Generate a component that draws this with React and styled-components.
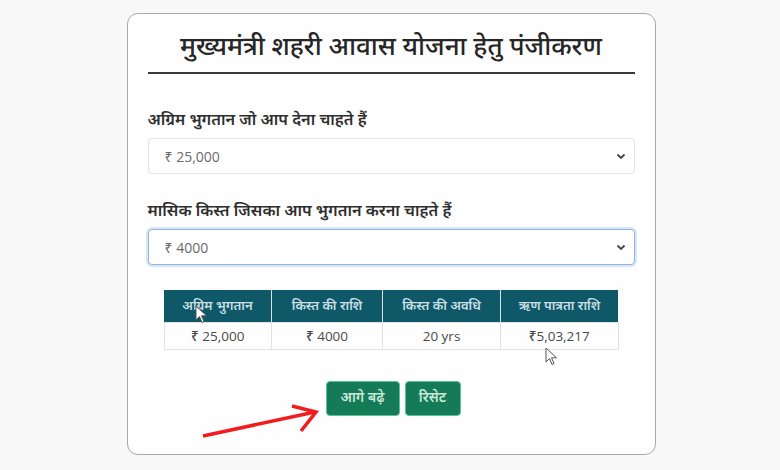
import React from "react";
import styled, { createGlobalStyle } from "styled-components";

const Global = createGlobalStyle`
  html, body { margin: 0; padding: 0; background: #f8f8f8; }
  body { font-family: "Noto Sans Devanagari", "Noto Sans", "Liberation Sans", sans-serif; }
`;

const Page = styled.div`
  position: relative;
  width: 780px;
  height: 470px;
  display: flex;
  justify-content: center;
  padding-top: 13px;
  box-sizing: border-box;
`;

const Card = styled.div`
  width: 529px;
  height: 442px;
  box-sizing: border-box;
  background: #fefefe;
  border: 1.5px solid #a9a9a9;
  border-radius: 11px;
  padding: 16px 20px 0 20px;
  display: flex;
  flex-direction: column;
  margin-left: 2px;
`;

const Title = styled.h2`
  margin: 0;
  text-align: center;
  font-size: 26px;
  font-weight: 500;
  color: #262626;
  line-height: 38px;
  padding-bottom: 4px;
  border-bottom: 2.5px solid #3a3a3a;
`;

const Field = styled.div`
  display: flex;
  flex-direction: column;
  margin-top: ${(p) => p.$top}px;
`;

const Label = styled.label`
  font-size: 16.2px;
  font-weight: 600;
  color: #2e2e2e;
  line-height: 22px;
  margin-bottom: 6px;
`;

const Select = styled.div`
  height: 36px;
  box-sizing: border-box;
  border: 1px solid ${(p) => (p.$focus ? "#8fb4e6" : "#e4e4e4")};
  box-shadow: ${(p) => (p.$focus ? "0 0 0 2px rgba(150,185,235,0.35)" : "none")};
  border-radius: 4px;
  background: #fff;
  display: flex;
  align-items: center;
  justify-content: space-between;
  padding: 0 8px 0 16px;
  font-family: "Open Sans", "Noto Sans", sans-serif;
  font-size: 14px;
  color: #6a6a6a;
`;

const Chevron = () => (
  <svg width="10" height="8" viewBox="0 0 10 8">
    <path d="M1.5 2.5 L5 6 L8.5 2.5" stroke="#444" strokeWidth="1.8" fill="none" />
  </svg>
);

const TableWrap = styled.div`
  margin: 25px 15px 0 15px;
  display: flex;
  justify-content: center;
`;

const Table = styled.table`
  width: 455px;
  border-collapse: collapse;
  table-layout: fixed;
`;

const Th = styled.th`
  background: #0f5868;
  color: #c9dde4;
  font-size: 13px;
  font-weight: 600;
  height: 32px;
  padding: 0;
  border-left: 1px solid #d5e2e6;
  &:first-child { border-left: none; }
`;

const Td = styled.td`
  text-align: center;
  font-family: "Open Sans", "Noto Sans", sans-serif;
  font-size: 13.5px;
  font-weight: 500;
  color: #4a4a4a;
  height: 26px;
  padding: 0;
  border: 1px solid #e2e2e2;
`;

const Buttons = styled.div`
  margin-top: 31px;
  display: flex;
  justify-content: center;
  gap: 5px;
  padding-left: 4px;
`;

const Button = styled.button`
  height: 35px;
  width: ${(p) => p.$w}px;
  border: 1px solid #53c49a;
  border-radius: 4px;
  background: #157a57;
  color: #c7e8d5;
  font-family: inherit;
  font-size: 14px;
  font-weight: 600;
  padding: 0;
`;

const Overlay = styled.svg`
  position: absolute;
  left: ${(p) => p.$x}px;
  top: ${(p) => p.$y}px;
  pointer-events: none;
`;

const Cursor = ({ x, y }) => (
  <Overlay $x={x} $y={y} width="14" height="20" viewBox="0 0 14 20">
    <path d="M1 1 L1 15 L4.5 11.5 L7 17.5 L9 16.5 L6.5 10.8 L11.5 10.8 Z" fill="#fff" stroke="#555" strokeWidth="1" strokeLinejoin="round" />
  </Overlay>
);

export default function App() {
  return (
    <>
      <Global />
      <Page>
        <Card>
          <Title>मुख्यमंत्री शहरी आवास योजना हेतु पंजीकरण</Title>
          <Field $top={36}>
            <Label>अग्रिम भुगतान जो आप देना चाहते हैं</Label>
            <Select>
              <span>₹ 25,000</span>
              <Chevron />
            </Select>
          </Field>
          <Field $top={27}>
            <Label>मासिक किस्त जिसका आप भुगतान करना चाहते हैं</Label>
            <Select $focus>
              <span>₹ 4000</span>
              <Chevron />
            </Select>
          </Field>
          <TableWrap>
            <Table>
              <thead>
                <tr>
                  <Th style={{ width: 107 }}>अग्रिम भुगतान</Th>
                  <Th style={{ width: 110 }}>किस्त की राशि</Th>
                  <Th style={{ width: 117 }}>किस्त की अवधि</Th>
                  <Th>ऋण पात्रता राशि</Th>
                </tr>
              </thead>
              <tbody>
                <tr>
                  <Td>₹ 25,000</Td>
                  <Td>₹ 4000</Td>
                  <Td>20 yrs</Td>
                  <Td>₹5,03,217</Td>
                </tr>
              </tbody>
            </Table>
          </TableWrap>
          <Buttons>
            <Button $w={74}>आगे बढ़े</Button>
            <Button $w={56}>रिसेट</Button>
          </Buttons>
        </Card>
        <Cursor x={195} y={305} />
        <Cursor x={545} y={347} />
        <Overlay $x={195} $y={400} width="130" height="45" viewBox="0 0 130 45">
          <path d="M8 36 L120 12" stroke="#f21c1c" strokeWidth="3.5" strokeLinecap="butt" />
          <path d="M97 6 L121 12 L106 31" stroke="#f21c1c" strokeWidth="3.5" fill="none" strokeLinejoin="miter" />
        </Overlay>
      </Page>
    </>
  );
}
